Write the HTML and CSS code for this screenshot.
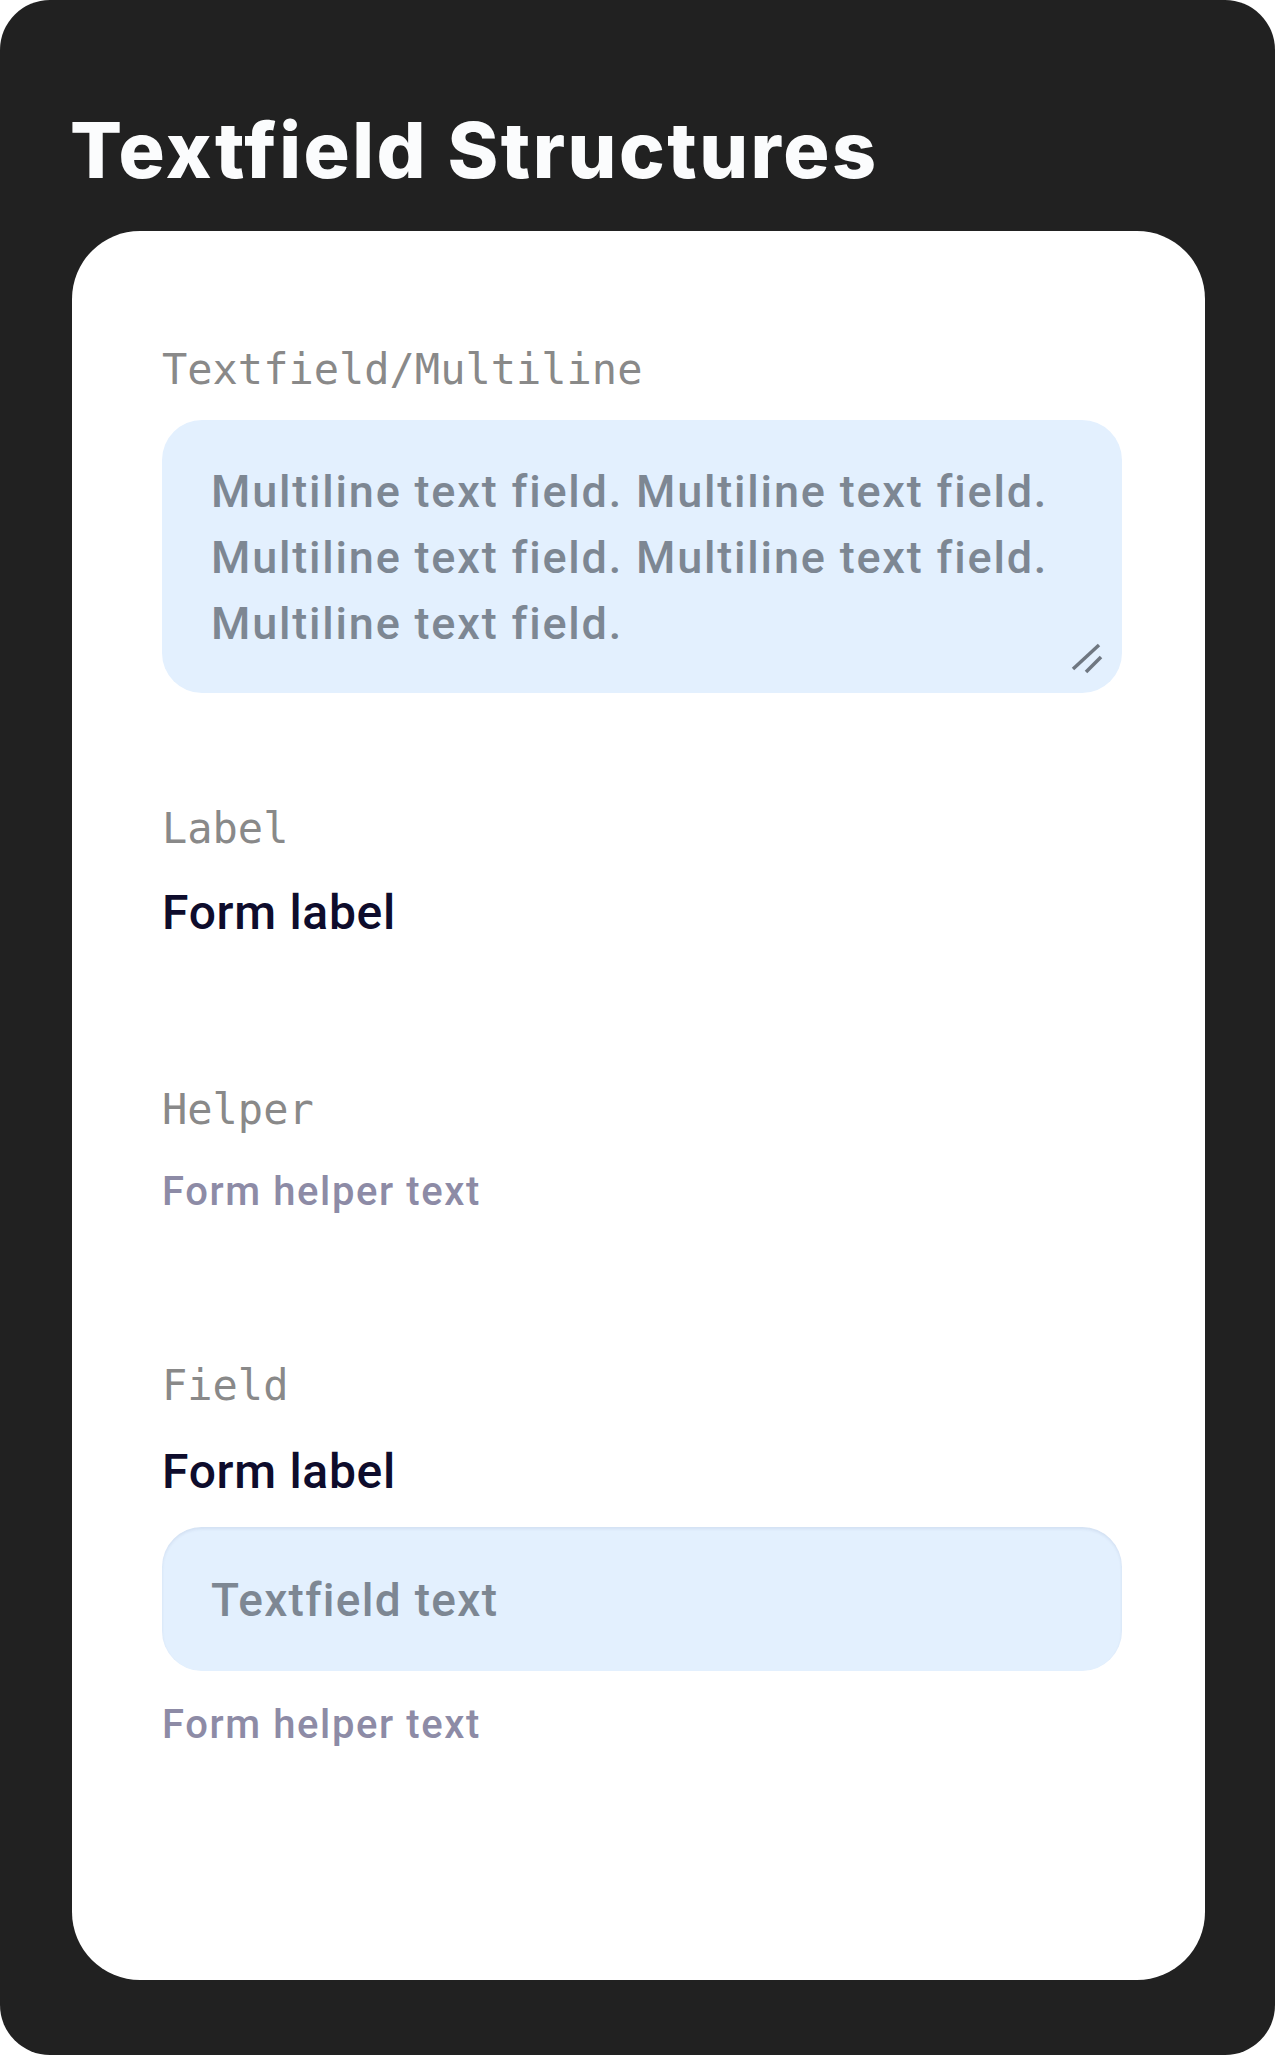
FILE: index.html
```html
<!DOCTYPE html>
<html lang="en">
<head>
<meta charset="utf-8">
<title>Textfield Structures</title>
<link rel="stylesheet" href="styles.css">
</head>
<body>
<div class="frame">
  <h1 class="title">Textfield Structures</h1>
  <div class="card">
    <div class="mono">Textfield/Multiline</div>
    <div class="multiline">
      <p class="multiline-text">Multiline text field. Multiline text field. Multiline text field. Multiline text field. Multiline text field.</p>
      <svg class="resize" width="34" height="34" viewBox="0 0 34 34" aria-hidden="true">
        <line x1="3" y1="27" x2="29" y2="3" stroke="#6f7781" stroke-width="3.5"/>
        <line x1="16" y1="30" x2="31" y2="15" stroke="#6f7781" stroke-width="3.5"/>
      </svg>
    </div>

    <div class="mono mono-label">Label</div>
    <div class="form-label form-label-1">Form label</div>

    <div class="mono mono-helper">Helper</div>
    <div class="helper helper-1">Form helper text</div>

    <div class="mono mono-field">Field</div>
    <div class="form-label form-label-2">Form label</div>
    <div class="field">
      <span class="field-text">Textfield text</span>
    </div>
    <div class="helper helper-2">Form helper text</div>
  </div>
</div>
</body>
</html>
```
FILE: styles.css
```css
html, body {
  margin: 0;
  padding: 0;
  background: #ffffff;
}

.frame {
  width: 1275px;
  height: 2055px;
  box-sizing: border-box;
  background: #212121;
  border-radius: 50px;
  padding: 112px 70px 0 72px;
  overflow: hidden;
}

.title {
  margin: 0 0 42px -2px;
  font-family: "Inter", "Liberation Sans", sans-serif;
  font-weight: 800;
  font-size: 77px;
  line-height: 77px;
  color: #fbfcfd;
  letter-spacing: 2.5px;
}

.card {
  background: #ffffff;
  border-radius: 68px;
  padding: 115px 83px 231px 90px;
  display: flex;
  flex-direction: column;
}

.mono {
  font-family: "DejaVu Sans Mono", "Liberation Mono", monospace;
  font-size: 42px;
  line-height: 48px;
  color: #898989;
  margin: 0;
}

.multiline {
  position: relative;
  margin-top: 26px;
  height: 273px;
  box-sizing: border-box;
  background: #e3f0fe;
  border-radius: 40px;
  padding: 39px 40px 0 49px;
}

.multiline-text {
  margin: 0;
  font-family: "Roboto", "Open Sans", sans-serif;
  font-weight: 500;
  font-size: 45px;
  line-height: 66px;
  color: #7d8793;
  letter-spacing: 1.8px;
}

.resize {
  position: absolute;
  left: 908px;
  top: 222px;
}

.mono-label { margin-top: 112px; }
.mono-helper { margin-top: 145px; }
.mono-field { margin-top: 146px; }

.form-label {
  font-family: "Roboto", "Open Sans", sans-serif;
  font-weight: 500;
  font-size: 48px;
  line-height: 56px;
  color: #0e0c2c;
  letter-spacing: 0.7px;
}
.form-label-1 { margin-top: 32px; }
.form-label-2 { margin-top: 34px; }

.helper {
  font-family: "Roboto", "Open Sans", sans-serif;
  font-weight: 500;
  font-size: 40px;
  line-height: 48px;
  color: #8d8ba6;
  letter-spacing: 1.6px;
}
.helper-1 { margin-top: 34px; }
.helper-2 { margin-top: 30px; }

.field {
  margin-top: 27px;
  height: 144px;
  box-sizing: border-box;
  background: #e3f0fe;
  border-radius: 40px;
  box-shadow: inset 0 2px 3px rgba(40, 70, 120, 0.09);
  display: flex;
  align-items: center;
  padding: 2px 0 0 49px;
}

.field-text {
  font-family: "Roboto", "Open Sans", sans-serif;
  font-weight: 500;
  font-size: 46px;
  line-height: 56px;
  color: #7d8793;
  letter-spacing: 1.3px;
}
```
